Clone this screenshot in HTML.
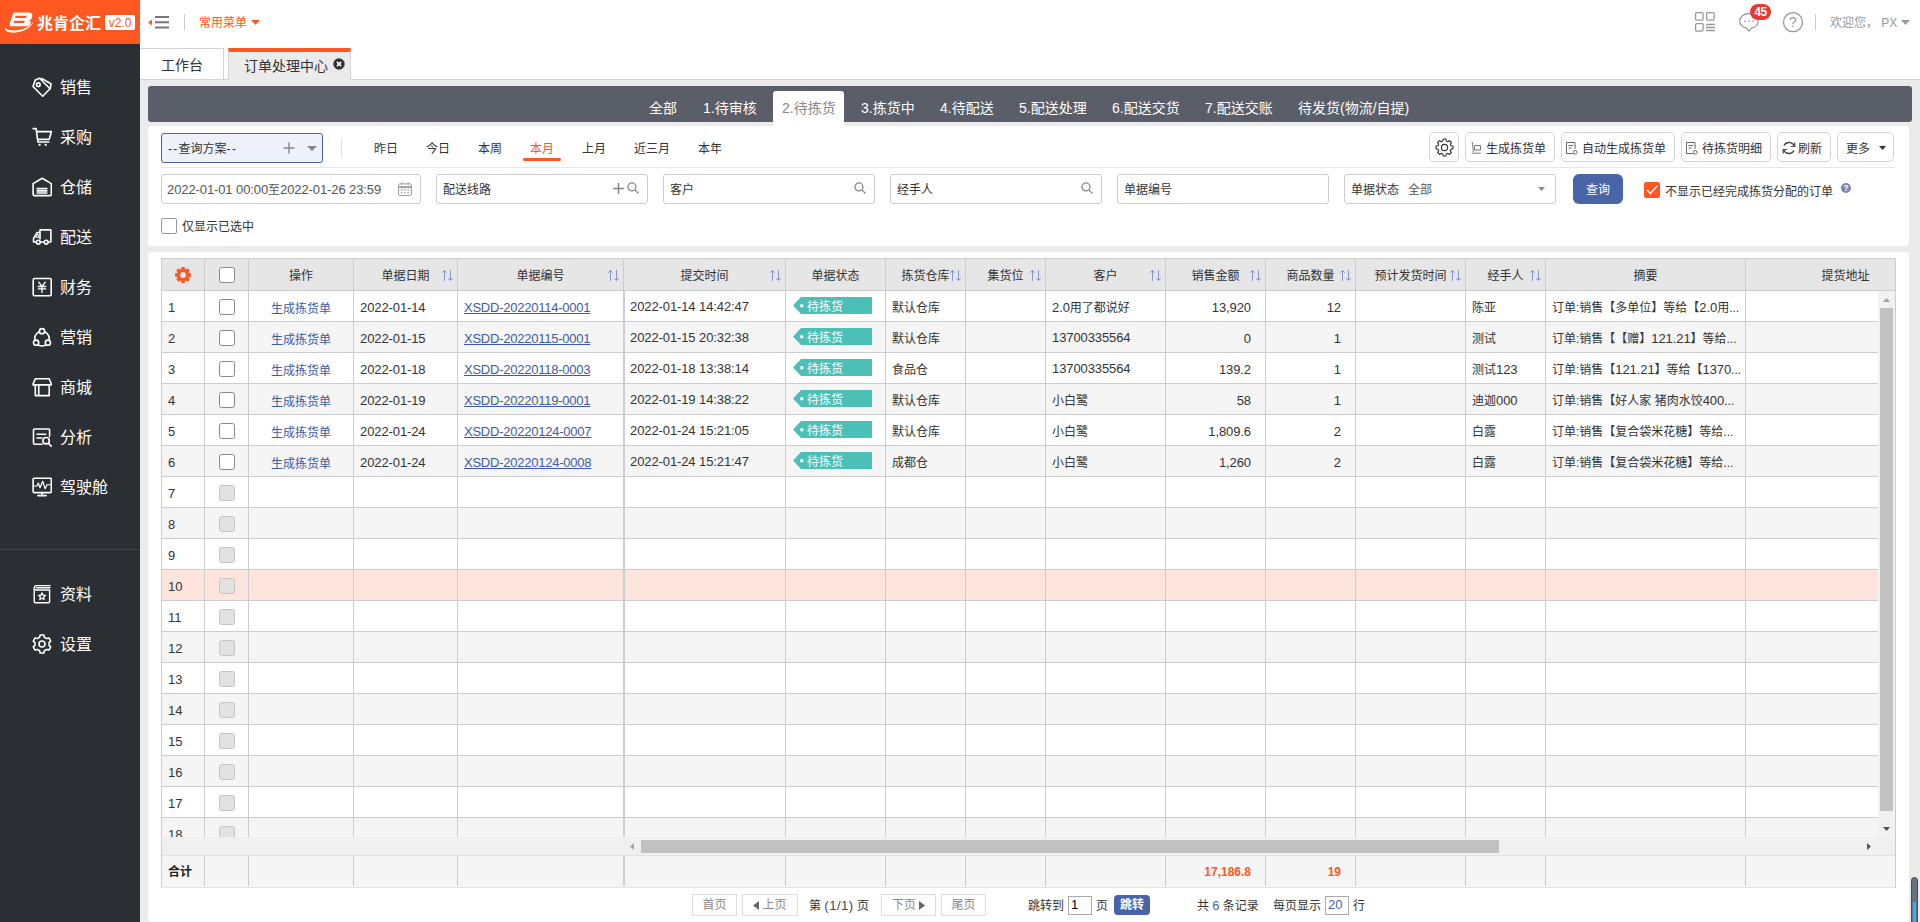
<!DOCTYPE html>
<html lang="zh-CN">
<head>
<meta charset="utf-8">
<title>订单处理中心</title>
<style>
*{box-sizing:border-box;margin:0;padding:0}
html,body{width:1920px;height:922px;overflow:hidden}
body{text-spacing-trim:space-all;font-family:"Liberation Sans","Noto Sans CJK SC",sans-serif;font-size:12px;color:#333;background:#ebebeb;position:relative}
.abs{position:absolute}
/* sidebar */
#side{position:absolute;left:0;top:0;width:140px;height:922px;background:#2b2f33}
#logo{position:absolute;left:0;top:0;width:140px;height:44px;background:#ff5722;color:#fff}
#logo .name{position:absolute;left:37px;top:11px;font-size:16px;font-weight:700;letter-spacing:0;line-height:26px;white-space:nowrap}
#logo .ver{position:absolute;left:105px;top:15px;width:30px;height:15px;background:#fff;border-radius:2px;color:#ff5722;font-size:12px;line-height:17px;text-align:center;letter-spacing:0}
.mi{position:absolute;left:0;width:140px;height:24px;color:#fff;font-size:16px;line-height:24px;white-space:nowrap}
.mi svg{position:absolute;left:32px;top:2px;width:20px;height:20px;fill:none;stroke:#fff;stroke-width:1.6;stroke-linecap:round;stroke-linejoin:round}
.mi span{position:absolute;left:60px;top:1px}
#side .sep{position:absolute;left:0;top:549px;width:140px;height:1px;background:#43474b}
/* topbar */
#top{position:absolute;left:140px;top:0;width:1780px;height:44px;background:#fff}
#top .t{position:absolute;white-space:nowrap}
.badge{position:absolute;left:1610px;top:4px;width:21px;height:16px;border-radius:8px;background:#e53935;color:#fff;font-size:12px;font-weight:700;line-height:16px;text-align:center;letter-spacing:-.300px}
#tabs{position:absolute;left:140px;top:44px;width:1780px;height:36px;background:#fff;border-bottom:1px solid #d4d4d4}
.tab{position:absolute;top:4px;height:32px;font-size:14px;line-height:30px;color:#333;white-space:nowrap}
#tab1{left:0;width:84px;border:1px solid #d4d4d4;border-left:none;border-bottom:none;padding-left:21px;top:4px;height:31px;line-height:32px}
#tab2{left:88px;width:123px;background:#ebebeb;border-top:4px solid #ff5722;border-left:1px solid #d4d4d4;border-right:1px solid #d4d4d4;padding-left:15px;line-height:28px}
/* dark bar */
#dark{position:absolute;left:148px;top:86px;width:1764px;height:36px;background:#5a5e68;border-radius:3px}
.dt{position:absolute;top:0;height:36px;line-height:45px;font-size:14px;color:#fff;white-space:nowrap}
#dtact{position:absolute;left:625px;top:5px;width:71px;height:36px;background:#fff;border-radius:3px 3px 0 0}
/* panels */
#filter{position:absolute;left:148px;top:126px;width:1761px;height:120px;background:#fff;border-radius:4px}
#grid{position:absolute;left:148px;top:250px;width:1761px;height:680px}
#gridbg{position:absolute;left:0;top:2px;width:1761px;height:670px;background:#fff;border-radius:4px}
.qsel{position:absolute;left:13px;top:7px;width:162px;height:30px;border:1px solid #4a62a8;border-radius:3px;background:#eef1fa;line-height:30px;padding-left:6px;color:#333}
.dq{position:absolute;top:11px;height:24px;line-height:24px;font-size:12px;color:#333;white-space:nowrap}
.inp{position:absolute;top:48px;height:30px;border:1px solid #ccc;border-radius:3px;background:#fff;line-height:31px;padding-left:6px;color:#333;white-space:nowrap;width:212px}
.btn{position:absolute;top:6px;height:30px;border:1px solid #d4d4d4;border-radius:5px;background:#fff;line-height:33px;color:#333;white-space:nowrap}
.btn svg{position:absolute}
/* grid */
#tbl{position:absolute;left:13px;top:8px;width:1735px;height:630px;border:1px solid #ccc;border-bottom-color:#dde3e8;overflow:hidden;background:#fff}
.hc{position:absolute;top:0;height:32px;background:#e6e6e6;border-right:1px solid #ccc;border-bottom:1px solid #ccc;text-align:center;line-height:34px;color:#333;white-space:nowrap;overflow:hidden}
.hc .so{position:absolute;right:3px;top:10px;width:13px;height:13px}
.row{position:absolute;left:0;width:1733px;height:31px;border-bottom:1px solid #ccc}
.row.ev{background:#f5f5f5}
.row.hl{background:#fde4dc}
.c{position:absolute;top:0;height:30px;line-height:35px;padding:0 6px;white-space:nowrap;overflow:hidden;color:#333}
.c.hi{line-height:33px}
.c.lo{line-height:37px}
.c.r{text-align:right;padding-right:14px}
.c.ct{text-align:center}
.n{font-size:13px;letter-spacing:-.100px;line-height:0}
.vl{z-index:2;position:absolute;top:32px;width:1px;background:#ccc;height:597px}
.cb{position:absolute;left:57px;top:8px;width:16px;height:16px;border:1px solid #8a8a8a;border-radius:2.500px;background:#fff}
.cb.dis{border-color:#c4c4c4;background:#e2e2e2}
a.lk{color:#3d5aa8;text-decoration:none}
a.lk.u{text-decoration:underline;letter-spacing:-.240px}
.tag{position:absolute;left:7px;top:6px;width:79px;height:17px}
.tag span{position:absolute;left:14px;top:0;line-height:20px;color:#fff;font-size:12px}
.pg{position:absolute;top:644px;height:22px;line-height:21px;white-space:nowrap;color:#333}
.pt{line-height:25px}
.pb{border:1px solid #ddd;background:#fff;color:#888;text-align:center}
</style>
</head>
<body>
<div id="side">
  <div id="logo">
    <svg class="abs" style="left:4px;top:10px" width="32" height="24" viewBox="0 0 32 24"><path d="M9.800 2.800h14.700c2.100 0 3.300 1.300 2.900 3.100l-.500 2.300c-.300 1.300-1 2.100-2.300 2.400 1.100.400 1.600 1.300 1.300 2.500l-.200.900c-.400 1.700-1.800 2.500-3.700 2.500H6l.900-3.300h12c.700 0 1.100-.300 1.200-.900l.100-.500c.100-.600-.200-.900-.900-.900H8.800l.700-2.700h11.300c.700 0 1.100-.300 1.200-.900l.100-.400c.100-.600-.200-.900-.900-.900H11.700L9.500 14.500H5.800z" fill="#fff" transform="translate(-.800 -.200) scale(1.060 1)"/><path d="M1.300 17.800C-.500 23.500 13 24.300 22 19.500c4-2.100 6.700-5 8-8.500-2.500 4.300-7.500 7.300-14 8.800-6.500 1.500-12.500.800-14.700-2z" fill="#fff"/></svg>
    <div class="name">兆肯企汇</div>
    <div class="ver">v2.0</div>
  </div>
  <div class="mi" style="top:75px"><svg viewBox="0 0 20 20"><path d="M1 9.500 3.300 3 7.600 1.200 18 11.700 10.700 19.200z"/><circle cx="6.300" cy="7.700" r="1.800"/><path d="M9.600 1.500l9.400 5.300-.800 4.800"/></svg><span>销售</span></div>
  <div class="mi" style="top:125px"><svg viewBox="0 0 20 20"><path d="M1.100 1.600h3l1.800 13.400h10.900M5.100 4.600h14.400l-2.400 7.800H6"/><rect x="6.600" y="16.800" width="2" height="2" fill="#fff" stroke="none"/><rect x="12.700" y="16.800" width="2" height="2" fill="#fff" stroke="none"/></svg><span>采购</span></div>
  <div class="mi" style="top:175px"><svg viewBox="0 0 20 20"><path d="M1.100 6.600 10.200 1.200l9.100 5.400v11a1 1 0 0 1-1 1H2.100a1 1 0 0 1-1-1z"/><path d="M4.600 11.600h10.800M4.600 13.800h10.800M4.600 16h10.800" stroke-width="1.700" stroke-linecap="butt"/></svg><span>仓储</span></div>
  <div class="mi" style="top:225px"><svg viewBox="0 0 20 20"><path d="M8 12V2.900h10.900V15h-2.400M11.900 15H8.500M8 5.500H5.200L1.500 11.500V15h2.500"/><path d="M5.600 7.300 3.800 10.300h2.600z" stroke-width="1"/><circle cx="6.300" cy="15.200" r="1.900"/><circle cx="14.200" cy="15.200" r="1.900"/></svg><span>配送</span></div>
  <div class="mi" style="top:275px"><svg viewBox="0 0 20 20"><rect x="1.200" y="1.500" width="18" height="17.200" rx="1.200"/><path d="M6.750 5.100 10 9.500l3.300-4.400M10 9.500v6.100M6.300 9.500h7.400M6.300 11.900h7.400" stroke-width="1.300"/></svg><span>财务</span></div>
  <div class="mi" style="top:325px"><svg viewBox="0 0 20 20"><circle cx="10" cy="11.700" r="7.300"/><circle cx="10" cy="4.200" r="2.600" fill="#2b2f33"/><circle cx="4.100" cy="15.700" r="2.600" fill="#2b2f33"/><circle cx="15.900" cy="15.700" r="2.600" fill="#2b2f33"/></svg><span>营销</span></div>
  <div class="mi" style="top:375px"><svg viewBox="0 0 20 20"><path d="M3.300 1.700h13.900l2.100 5.200v1H1.100v-1zM3.300 7.900v10.700h13.900V7.900M6.750 7.900v10.700"/></svg><span>商城</span></div>
  <div class="mi" style="top:425px"><svg viewBox="0 0 20 20"><path d="M10.200 17.200H2.500a1 1 0 0 1-1-1V3a1 1 0 0 1 1-1h14.100a1 1 0 0 1 1 1v6.500M5 7.200h8.700M5 11h4.800"/><circle cx="14.100" cy="13.700" r="3.200"/><path d="M16.600 16.400l2.600 2.800"/></svg><span>分析</span></div>
  <div class="mi" style="top:475px"><svg viewBox="0 0 20 20"><rect x="1.100" y="1.200" width="18.200" height="14.400" rx="1"/><path d="M10 15.600v3M5.900 18.600h8.200"/><path d="M2 9h3l1.300-3L8 10.800l2.700-6.500 2.500 7.400L15 7.750h3.500" stroke-width="1.200"/></svg><span>驾驶舱</span></div>
  <div class="mi" style="top:582px"><svg viewBox="0 0 20 20"><path d="M18 1.600H4.400a2.200 2.200 0 0 0-2.200 2.200v14a1 1 0 0 0 1 1h13.400a1 1 0 0 0 1-1V6H4.400a2.200 2.200 0 0 1-2.200-2.200M4.400 3.800H18" stroke-width="1.400"/><path d="M10.00 8.80L11.00 11.12L13.52 11.36L11.62 13.03L12.17 15.49L10.00 14.20L7.83 15.49L8.38 13.03L6.48 11.36L9.00 11.12z" stroke-width="1.300"/></svg><span>资料</span></div>
  <div class="mi" style="top:632px"><svg viewBox="0 0 20 20"><path d="M7.67 3.19L8.17 0.98L11.83 0.98L12.33 3.19L14.73 4.57L16.89 3.91L18.72 7.07L17.07 8.61L17.07 11.39L18.72 12.93L16.89 16.09L14.73 15.43L12.33 16.81L11.83 19.02L8.17 19.02L7.67 16.81L5.27 15.43L3.11 16.09L1.28 12.93L2.93 11.39L2.93 8.61L1.28 7.07L3.11 3.91L5.27 4.57z"/><circle cx="10" cy="10" r="3"/></svg><span>设置</span></div>
  <div class="sep"></div>
</div>
<div id="top">
  <svg class="abs" style="left:7px;top:14px" width="24" height="16" viewBox="0 0 24 16"><path d="M1 8.500 5 5.500v6z" fill="#ff5722"/><path d="M8 3h14M8 8.200h14M8 13.400h14" stroke="#777" stroke-width="2" fill="none"/></svg>
  <div class="abs" style="left:44px;top:14px;width:1px;height:16px;background:#ccc"></div>
  <div class="t" style="left:59px;top:14px;line-height:18px;color:#ff5722">常用菜单</div>
  <svg class="abs" style="left:111px;top:20px" width="9" height="5" viewBox="0 0 9 5"><path d="M0 0h9L4.500 5z" fill="#ff5722"/></svg>
  <svg class="abs" style="left:1554px;top:11px" width="22" height="22" viewBox="0 0 22 22" fill="none" stroke="#999" stroke-width="1.300"><rect x="1.600" y="1.600" width="7.500" height="7.500" rx="1"/><rect x="12.600" y="1.600" width="7.500" height="7.500" rx="1"/><rect x="1.600" y="12.600" width="7.500" height="7.500" rx="1"/><path d="M12 13.500h9M12 16.500h9M12 19.500h9"/></svg>
  <svg class="abs" style="left:1598px;top:12px" width="22" height="21" viewBox="0 0 22 21" fill="none" stroke="#999" stroke-width="1.300"><path d="M11 1.500c5.200 0 9.300 3.300 9.300 7.500 0 3.500-2.900 6.400-6.900 7.200L11 19.300 8.600 16.200C4.600 15.400 1.700 12.500 1.700 9c0-4.200 4.100-7.500 9.300-7.500z"/><path d="M6.200 9.300h1.400M10.300 9.300h1.400M14.400 9.300h1.400" stroke-width="1.500"/></svg>
  <div class="badge">45</div>
  <svg class="abs" style="left:1642px;top:12px" width="22" height="21" viewBox="0 0 22 21"><circle cx="11" cy="10.200" r="9.500" fill="none" stroke="#999" stroke-width="1.300"/><text x="11" y="15.300" font-size="14" text-anchor="middle" fill="#999" font-family="Liberation Sans, sans-serif">?</text></svg>
  <div class="abs" style="left:1675px;top:14px;width:1px;height:16px;background:#ccc"></div>
  <div class="t" style="left:1690px;top:14px;line-height:18px;color:#999">欢迎您， PX</div>
  <svg class="abs" style="left:1761px;top:20px" width="9" height="5" viewBox="0 0 9 5"><path d="M0 0h9L4.500 5z" fill="#999"/></svg>
</div>
<div id="tabs">
  <div class="tab" id="tab1">工作台</div>
  <div class="tab" id="tab2">订单处理中心<svg class="abs" style="left:104px;top:6px" width="12" height="12" viewBox="0 0 13 13"><circle cx="6.500" cy="6.500" r="6.200" fill="#333"/><path d="M4.200 4.200l4.600 4.600M8.800 4.200 4.200 8.800" stroke="#fff" stroke-width="1.600"/></svg></div>
</div>
<div id="dark"><div id="dtact"></div><div class="dt" style="left:501px">全部</div><div class="dt" style="left:555px">1.待审核</div><div class="dt" style="left:634px;color:#888">2.待拣货</div><div class="dt" style="left:713px">3.拣货中</div><div class="dt" style="left:792px">4.待配送</div><div class="dt" style="left:871px">5.配送处理</div><div class="dt" style="left:964px">6.配送交货</div><div class="dt" style="left:1057px">7.配送交账</div><div class="dt" style="left:1150px">待发货(物流/自提)</div></div>
<div id="filter">
<div class="qsel"><span style="letter-spacing:1.300px">--</span>查询方案<span style="letter-spacing:1.300px">--</span><svg class="abs" style="left:121px;top:8px" width="12" height="12" viewBox="0 0 12 12"><path d="M6 .500v11M.500 6h11" stroke="#888" stroke-width="1.400"/></svg><svg class="abs" style="left:145px;top:12px" width="10" height="5" viewBox="0 0 10 5"><path d="M0 0h10L5 5z" fill="#888"/></svg></div>
<div class="abs" style="left:193px;top:12px;width:1px;height:20px;background:#ddd"></div>
<div class="dq" style="left:226px">昨日</div><div class="dq" style="left:278px">今日</div><div class="dq" style="left:330px">本周</div><div class="dq" style="left:382px;color:#ff5722">本月</div><div class="dq" style="left:434px">上月</div><div class="dq" style="left:486px">近三月</div><div class="dq" style="left:550px">本年</div>
<div class="abs" style="left:375px;top:32px;width:38px;height:3px;border-radius:2px;background:#ff5722"></div>
<div class="abs" style="left:13px;top:41px;width:1734px;height:1px;background:#e6e6e6"></div>
<div class="btn" style="left:1281px;width:30px"><svg style="left:5px;top:5px" width="19" height="19" viewBox="0 0 20 20" fill="none" stroke="#333" stroke-width="1.200" stroke-linejoin="round"><path d="M8.17 3.14L8.57 1.11L11.43 1.11L11.83 3.14L13.56 3.86L15.27 2.70L17.30 4.73L16.14 6.44L16.86 8.17L18.89 8.57L18.89 11.43L16.86 11.83L16.14 13.56L17.30 15.27L15.27 17.30L13.56 16.14L11.83 16.86L11.43 18.89L8.57 18.89L8.17 16.86L6.44 16.14L4.73 17.30L2.70 15.27L3.86 13.56L3.14 11.83L1.11 11.43L1.11 8.57L3.14 8.17L3.86 6.44L2.70 4.73L4.73 2.70L6.44 3.86z"/><circle cx="10" cy="10" r="3.300"/></svg></div>
<div class="btn" style="left:1317px;width:90px"><svg style="left:5px;top:9px" width="11" height="12" viewBox="0 0 11 12" fill="none" stroke="#777" stroke-width="1"><path d="M.500 .500h1l.800 9.500M3.500 3.500h6v4.500h-6zM.800 11.200h9"/></svg><span style="position:absolute;left:20px">生成拣货单</span></div>
<div class="btn" style="left:1413px;width:114px"><svg style="left:4px;top:9px" width="12" height="13" viewBox="0 0 12 13" fill="none" stroke="#666" stroke-width="1"><path d="M7 11.500H.500V.500h8.500V7M2.500 3.500h4.500M2.500 6h3"/><circle cx="9.300" cy="10.300" r="1.800"/></svg><span style="position:absolute;left:20px">自动生成拣货单</span></div>
<div class="btn" style="left:1533px;width:90px"><svg style="left:4px;top:9px" width="12" height="13" viewBox="0 0 12 13" fill="none" stroke="#666" stroke-width="1"><path d="M7 11.500H.500V.500h8.500V7M2.500 3.500h4.500M2.500 6h3"/><circle cx="9.300" cy="10.300" r="1.800"/></svg><span style="position:absolute;left:20px">待拣货明细</span></div>
<div class="btn" style="left:1629px;width:54px"><svg style="left:4px;top:8px" width="14" height="14" viewBox="0 0 14 14" fill="none" stroke="#444" stroke-width="1.400"><path d="M12.300 5.500A5.600 5.600 0 0 0 2 4.500M1.700 8.500A5.600 5.600 0 0 0 12 9.500"/><path d="M12.800 1.500v4h-4M1.200 12.500v-4h4" stroke-width="1.200"/></svg><span style="position:absolute;left:20px">刷新</span></div>
<div class="btn" style="left:1689px;width:57px"><svg style="left:41px;top:13px" width="7" height="4" viewBox="0 0 7 4"><path d="M0 0h7L3.500 4z" fill="#333"/></svg><span style="position:absolute;left:8px">更多</span></div>
<div class="inp" style="left:13px;width:260px;color:#555;padding-left:5px"><span class="n">2022-01-01 00:00</span>至<span class="n">2022-01-26 23:59</span><svg class="abs" style="left:236px;top:7px" width="14" height="14" viewBox="0 0 15 15" fill="none" stroke="#999" stroke-width="1"><rect x=".500" y="2" width="14" height="12.500" rx="1.500"/><path d="M.500 5.500h14" stroke-width="2"/><path d="M4 .500v2.500M11 .500v2.500M3 8.500h2M6.500 8.500h2M10 8.500h2M3 11.500h2M6.500 11.500h2M10 11.500h2" stroke-width="1.200"/></svg></div>
<div class="inp" style="left:288px">配送线路<svg class="abs" style="left:176px;top:8px" width="11" height="11" viewBox="0 0 11 11"><path d="M5.500 0v11M0 5.500h11" stroke="#888" stroke-width="1.600"/></svg><svg class="abs" style="left:190px;top:7px" width="12" height="12" viewBox="0 0 13 13" fill="none" stroke="#888" stroke-width="1.400"><circle cx="5.300" cy="5.300" r="4.300"/><path d="M8.500 8.500l4 4"/></svg></div>
<div class="inp" style="left:515px">客户<svg class="abs" style="left:190px;top:7px" width="12" height="12" viewBox="0 0 13 13" fill="none" stroke="#888" stroke-width="1.400"><circle cx="5.300" cy="5.300" r="4.300"/><path d="M8.500 8.500l4 4"/></svg></div>
<div class="inp" style="left:742px">经手人<svg class="abs" style="left:190px;top:7px" width="12" height="12" viewBox="0 0 13 13" fill="none" stroke="#888" stroke-width="1.400"><circle cx="5.300" cy="5.300" r="4.300"/><path d="M8.500 8.500l4 4"/></svg></div>
<div class="inp" style="left:969px">单据编号</div>
<div class="inp" style="left:1196px">单据状态<span style="margin-left:9px;color:#555">全部</span><svg class="abs" style="left:193px;top:12px" width="7" height="4" viewBox="0 0 7 4"><path d="M0 0h7L3.500 4z" fill="#888"/></svg></div>
<div class="abs" style="left:1425px;top:48px;width:50px;height:30px;border-radius:6px;background:#4a64a8;color:#fff;text-align:center;line-height:32px">查询</div>
<div class="abs" style="left:1496px;top:56px;width:16px;height:16px;border-radius:2px;background:#ff5722"><svg class="abs" style="left:2px;top:3px" width="12" height="10" viewBox="0 0 12 10"><path d="M1 5l3.500 3.500L11 1" fill="none" stroke="#fff" stroke-width="1.500"/></svg></div>
<div class="abs" style="left:1517px;top:56px;line-height:20px;white-space:nowrap;color:#333">不显示已经完成拣货分配的订单</div>
<svg class="abs" style="left:1693px;top:57px" width="10" height="10" viewBox="0 0 10 10"><circle cx="5" cy="5" r="5" fill="#7a85ad"/><text x="5" y="8.400" font-size="9" font-weight="700" text-anchor="middle" fill="#fff" font-family="Liberation Sans, sans-serif">?</text></svg>
<div class="abs" style="left:13px;top:92px;width:16px;height:16px;border:1px solid #999;border-radius:2px;background:#fff"></div>
<div class="abs" style="left:34px;top:91px;line-height:21px;white-space:nowrap;color:#333">仅显示已选中</div>
</div>
<div id="grid">
<div id="gridbg"></div>
<div id="tbl">
<div class="hc" style="left:0px;width:43px"><svg class="abs" style="left:13px;top:8px" width="16" height="16" viewBox="0 0 16 16"><path d="M6.43 2.31L6.68 0.31L9.32 0.31L9.57 2.31L10.91 2.87L12.50 1.63L14.37 3.50L13.13 5.09L13.69 6.43L15.69 6.68L15.69 9.32L13.69 9.57L13.13 10.91L14.37 12.50L12.50 14.37L10.91 13.13L9.57 13.69L9.32 15.69L6.68 15.69L6.43 13.69L5.09 13.13L3.50 14.37L1.63 12.50L2.87 10.91L2.31 9.57L0.31 9.32L0.31 6.68L2.31 6.43L2.87 5.09L1.63 3.50L3.50 1.63L5.09 2.87z" fill="#ff5722" stroke="#ff5722" stroke-width=".800" stroke-linejoin="round"/><circle cx="8" cy="8" r="2.900" fill="#e6e6e6"/></svg></div><div class="hc" style="left:43px;width:44px"><div class="cb" style="left:14px;top:8px"></div></div><div class="hc" style="left:87px;width:105px">操作</div><div class="hc" style="left:192px;width:104px">单据日期<svg class="so" viewBox="0 0 13 13" fill="none" stroke="#8794c4" stroke-width="1"><path d="M3.500 12V1.500M1.200 3.800l2.300-2.300 2.300 2.300M9.500 1v10.500M7.200 9.200l2.300 2.300 2.300-2.300"/></svg></div><div class="hc" style="left:296px;width:166px">单据编号<svg class="so" viewBox="0 0 13 13" fill="none" stroke="#8794c4" stroke-width="1"><path d="M3.500 12V1.500M1.200 3.800l2.300-2.300 2.300 2.300M9.500 1v10.500M7.200 9.200l2.300 2.300 2.300-2.300"/></svg></div><div class="hc" style="left:462px;width:162px">提交时间<svg class="so" viewBox="0 0 13 13" fill="none" stroke="#8794c4" stroke-width="1"><path d="M3.500 12V1.500M1.200 3.800l2.300-2.300 2.300 2.300M9.500 1v10.500M7.200 9.200l2.300 2.300 2.300-2.300"/></svg></div><div class="hc" style="left:624px;width:100px">单据状态</div><div class="hc" style="left:724px;width:80px">拣货仓库<svg class="so" viewBox="0 0 13 13" fill="none" stroke="#8794c4" stroke-width="1"><path d="M3.500 12V1.500M1.200 3.800l2.300-2.300 2.300 2.300M9.500 1v10.500M7.200 9.200l2.300 2.300 2.300-2.300"/></svg></div><div class="hc" style="left:804px;width:80px">集货位<svg class="so" viewBox="0 0 13 13" fill="none" stroke="#8794c4" stroke-width="1"><path d="M3.500 12V1.500M1.200 3.800l2.300-2.300 2.300 2.300M9.500 1v10.500M7.200 9.200l2.300 2.300 2.300-2.300"/></svg></div><div class="hc" style="left:884px;width:120px">客户<svg class="so" viewBox="0 0 13 13" fill="none" stroke="#8794c4" stroke-width="1"><path d="M3.500 12V1.500M1.200 3.800l2.300-2.300 2.300 2.300M9.500 1v10.500M7.200 9.200l2.300 2.300 2.300-2.300"/></svg></div><div class="hc" style="left:1004px;width:100px">销售金额<svg class="so" viewBox="0 0 13 13" fill="none" stroke="#8794c4" stroke-width="1"><path d="M3.500 12V1.500M1.200 3.800l2.300-2.300 2.300 2.300M9.500 1v10.500M7.200 9.200l2.300 2.300 2.300-2.300"/></svg></div><div class="hc" style="left:1104px;width:90px">商品数量<svg class="so" viewBox="0 0 13 13" fill="none" stroke="#8794c4" stroke-width="1"><path d="M3.500 12V1.500M1.200 3.800l2.300-2.300 2.300 2.300M9.500 1v10.500M7.200 9.200l2.300 2.300 2.300-2.300"/></svg></div><div class="hc" style="left:1194px;width:110px">预计发货时间<svg class="so" viewBox="0 0 13 13" fill="none" stroke="#8794c4" stroke-width="1"><path d="M3.500 12V1.500M1.200 3.800l2.300-2.300 2.300 2.300M9.500 1v10.500M7.200 9.200l2.300 2.300 2.300-2.300"/></svg></div><div class="hc" style="left:1304px;width:80px">经手人<svg class="so" viewBox="0 0 13 13" fill="none" stroke="#8794c4" stroke-width="1"><path d="M3.500 12V1.500M1.200 3.800l2.300-2.300 2.300 2.300M9.500 1v10.500M7.200 9.200l2.300 2.300 2.300-2.300"/></svg></div><div class="hc" style="left:1384px;width:200px">摘要</div><div class="hc" style="left:1584px;width:200px">提货地址</div>
<div class="vl" style="left:42px"></div><div class="vl" style="left:86px"></div><div class="vl" style="left:191px"></div><div class="vl" style="left:295px"></div><div class="vl" style="left:461px;width:2px;background:#cdced3"></div><div class="vl" style="left:623px"></div><div class="vl" style="left:723px"></div><div class="vl" style="left:803px"></div><div class="vl" style="left:883px"></div><div class="vl" style="left:1003px"></div><div class="vl" style="left:1103px"></div><div class="vl" style="left:1193px"></div><div class="vl" style="left:1303px"></div><div class="vl" style="left:1383px"></div><div class="vl" style="left:1583px"></div>
<div class="row" style="top:32px"><div class="c " style="left:0px;width:42px"><span class="n">1</span></div><div class="cb"></div><div class="c ct lo" style="left:87px;width:104px"><a class="lk">生成拣货单</a></div><div class="c " style="left:192px;width:103px"><span class="n">2022-01-14</span></div><div class="c " style="left:296px;width:165px"><a class="lk u n">XSDD-20220114-0001</a></div><div class="c hi" style="left:462px;width:161px"><span class="n">2022-01-14 14:42:47</span></div><div class="c" style="left:624px;width:99px"><div class="tag"><svg class="abs" style="left:0;top:0" width="79" height="17" viewBox="0 0 79 17"><path d="M0 8.500 8 0h71v17H8z" fill="#4cc0b7"/><circle cx="8.800" cy="8.700" r="1.800" fill="#fff"/></svg><span>待拣货</span></div></div><div class="c " style="left:724px;width:79px">默认仓库</div><div class="c " style="left:884px;width:119px"><span class="n">2.0</span>用了都说好</div><div class="c r" style="left:1004px;width:99px"><span class="n">13,920</span></div><div class="c r" style="left:1104px;width:89px"><span class="n">12</span></div><div class="c " style="left:1304px;width:79px">陈亚</div><div class="c " style="left:1384px;width:199px">订单:销售【多单位】等给【<span class="n">2.0</span>用...</div></div>
<div class="row ev" style="top:63px"><div class="c " style="left:0px;width:42px"><span class="n">2</span></div><div class="cb"></div><div class="c ct lo" style="left:87px;width:104px"><a class="lk">生成拣货单</a></div><div class="c " style="left:192px;width:103px"><span class="n">2022-01-15</span></div><div class="c " style="left:296px;width:165px"><a class="lk u n">XSDD-20220115-0001</a></div><div class="c hi" style="left:462px;width:161px"><span class="n">2022-01-15 20:32:38</span></div><div class="c" style="left:624px;width:99px"><div class="tag"><svg class="abs" style="left:0;top:0" width="79" height="17" viewBox="0 0 79 17"><path d="M0 8.500 8 0h71v17H8z" fill="#4cc0b7"/><circle cx="8.800" cy="8.700" r="1.800" fill="#fff"/></svg><span>待拣货</span></div></div><div class="c " style="left:724px;width:79px">默认仓库</div><div class="c hi" style="left:884px;width:119px"><span class="n">13700335564</span></div><div class="c r" style="left:1004px;width:99px"><span class="n">0</span></div><div class="c r" style="left:1104px;width:89px"><span class="n">1</span></div><div class="c " style="left:1304px;width:79px">测试</div><div class="c " style="left:1384px;width:199px">订单:销售【【赠】<span class="n">121.21</span>】等给...</div></div>
<div class="row" style="top:94px"><div class="c " style="left:0px;width:42px"><span class="n">3</span></div><div class="cb"></div><div class="c ct lo" style="left:87px;width:104px"><a class="lk">生成拣货单</a></div><div class="c " style="left:192px;width:103px"><span class="n">2022-01-18</span></div><div class="c " style="left:296px;width:165px"><a class="lk u n">XSDD-20220118-0003</a></div><div class="c hi" style="left:462px;width:161px"><span class="n">2022-01-18 13:38:14</span></div><div class="c" style="left:624px;width:99px"><div class="tag"><svg class="abs" style="left:0;top:0" width="79" height="17" viewBox="0 0 79 17"><path d="M0 8.500 8 0h71v17H8z" fill="#4cc0b7"/><circle cx="8.800" cy="8.700" r="1.800" fill="#fff"/></svg><span>待拣货</span></div></div><div class="c " style="left:724px;width:79px">食品仓</div><div class="c hi" style="left:884px;width:119px"><span class="n">13700335564</span></div><div class="c r" style="left:1004px;width:99px"><span class="n">139.2</span></div><div class="c r" style="left:1104px;width:89px"><span class="n">1</span></div><div class="c " style="left:1304px;width:79px">测试<span class="n">123</span></div><div class="c " style="left:1384px;width:199px">订单:销售【<span class="n">121.21</span>】等给【<span class="n">1370</span>...</div></div>
<div class="row ev" style="top:125px"><div class="c " style="left:0px;width:42px"><span class="n">4</span></div><div class="cb"></div><div class="c ct lo" style="left:87px;width:104px"><a class="lk">生成拣货单</a></div><div class="c " style="left:192px;width:103px"><span class="n">2022-01-19</span></div><div class="c " style="left:296px;width:165px"><a class="lk u n">XSDD-20220119-0001</a></div><div class="c hi" style="left:462px;width:161px"><span class="n">2022-01-19 14:38:22</span></div><div class="c" style="left:624px;width:99px"><div class="tag"><svg class="abs" style="left:0;top:0" width="79" height="17" viewBox="0 0 79 17"><path d="M0 8.500 8 0h71v17H8z" fill="#4cc0b7"/><circle cx="8.800" cy="8.700" r="1.800" fill="#fff"/></svg><span>待拣货</span></div></div><div class="c " style="left:724px;width:79px">默认仓库</div><div class="c " style="left:884px;width:119px">小白鹭</div><div class="c r" style="left:1004px;width:99px"><span class="n">58</span></div><div class="c r" style="left:1104px;width:89px"><span class="n">1</span></div><div class="c " style="left:1304px;width:79px">迪迦<span class="n">000</span></div><div class="c " style="left:1384px;width:199px">订单:销售【好人家 猪肉水饺<span class="n">400</span>...</div></div>
<div class="row" style="top:156px"><div class="c " style="left:0px;width:42px"><span class="n">5</span></div><div class="cb"></div><div class="c ct lo" style="left:87px;width:104px"><a class="lk">生成拣货单</a></div><div class="c " style="left:192px;width:103px"><span class="n">2022-01-24</span></div><div class="c " style="left:296px;width:165px"><a class="lk u n">XSDD-20220124-0007</a></div><div class="c hi" style="left:462px;width:161px"><span class="n">2022-01-24 15:21:05</span></div><div class="c" style="left:624px;width:99px"><div class="tag"><svg class="abs" style="left:0;top:0" width="79" height="17" viewBox="0 0 79 17"><path d="M0 8.500 8 0h71v17H8z" fill="#4cc0b7"/><circle cx="8.800" cy="8.700" r="1.800" fill="#fff"/></svg><span>待拣货</span></div></div><div class="c " style="left:724px;width:79px">默认仓库</div><div class="c " style="left:884px;width:119px">小白鹭</div><div class="c r" style="left:1004px;width:99px"><span class="n">1,809.6</span></div><div class="c r" style="left:1104px;width:89px"><span class="n">2</span></div><div class="c " style="left:1304px;width:79px">白露</div><div class="c " style="left:1384px;width:199px">订单:销售【复合袋米花糖】等给...</div></div>
<div class="row ev" style="top:187px"><div class="c " style="left:0px;width:42px"><span class="n">6</span></div><div class="cb"></div><div class="c ct lo" style="left:87px;width:104px"><a class="lk">生成拣货单</a></div><div class="c " style="left:192px;width:103px"><span class="n">2022-01-24</span></div><div class="c " style="left:296px;width:165px"><a class="lk u n">XSDD-20220124-0008</a></div><div class="c hi" style="left:462px;width:161px"><span class="n">2022-01-24 15:21:47</span></div><div class="c" style="left:624px;width:99px"><div class="tag"><svg class="abs" style="left:0;top:0" width="79" height="17" viewBox="0 0 79 17"><path d="M0 8.500 8 0h71v17H8z" fill="#4cc0b7"/><circle cx="8.800" cy="8.700" r="1.800" fill="#fff"/></svg><span>待拣货</span></div></div><div class="c " style="left:724px;width:79px">成都仓</div><div class="c " style="left:884px;width:119px">小白鹭</div><div class="c r" style="left:1004px;width:99px"><span class="n">1,260</span></div><div class="c r" style="left:1104px;width:89px"><span class="n">2</span></div><div class="c " style="left:1304px;width:79px">白露</div><div class="c " style="left:1384px;width:199px">订单:销售【复合袋米花糖】等给...</div></div>
<div class="row" style="top:218px"><div class="c " style="left:0px;width:42px"><span class="n">7</span></div><div class="cb dis"></div></div>
<div class="row ev" style="top:249px"><div class="c " style="left:0px;width:42px"><span class="n">8</span></div><div class="cb dis"></div></div>
<div class="row" style="top:280px"><div class="c " style="left:0px;width:42px"><span class="n">9</span></div><div class="cb dis"></div></div>
<div class="row ev hl" style="top:311px"><div class="c " style="left:0px;width:42px"><span class="n">10</span></div><div class="cb dis"></div></div>
<div class="row" style="top:342px"><div class="c " style="left:0px;width:42px"><span class="n">11</span></div><div class="cb dis"></div></div>
<div class="row ev" style="top:373px"><div class="c " style="left:0px;width:42px"><span class="n">12</span></div><div class="cb dis"></div></div>
<div class="row" style="top:404px"><div class="c " style="left:0px;width:42px"><span class="n">13</span></div><div class="cb dis"></div></div>
<div class="row ev" style="top:435px"><div class="c " style="left:0px;width:42px"><span class="n">14</span></div><div class="cb dis"></div></div>
<div class="row" style="top:466px"><div class="c " style="left:0px;width:42px"><span class="n">15</span></div><div class="cb dis"></div></div>
<div class="row ev" style="top:497px"><div class="c " style="left:0px;width:42px"><span class="n">16</span></div><div class="cb dis"></div></div>
<div class="row" style="top:528px"><div class="c " style="left:0px;width:42px"><span class="n">17</span></div><div class="cb dis"></div></div>
<div class="row ev" style="top:559px"><div class="c " style="left:0px;width:42px"><span class="n">18</span></div><div class="cb dis"></div></div>
<div class="abs" style="z-index:3;left:1716px;top:32px;width:18px;height:548px;background:#f1f1f1"><svg class="abs" style="left:5px;top:7px" width="7" height="4" viewBox="0 0 9 5"><path d="M0 5h9L4.500 0z" fill="#a3a3a3"/></svg><div class="abs" style="left:2px;top:17px;width:13px;height:503px;background:#c1c1c1"></div><svg class="abs" style="left:5px;top:536px" width="7" height="4" viewBox="0 0 9 5"><path d="M0 0h9L4.500 5z" fill="#505050"/></svg></div>
<div class="abs" style="z-index:3;left:0;top:578px;width:1733px;height:18px;background:#f0f0f0"><svg class="abs" style="left:468px;top:6px" width="4" height="7" viewBox="0 0 5 9"><path d="M5 0v9L0 4.500z" fill="#a3a3a3"/></svg><div class="abs" style="left:479px;top:3px;width:858px;height:13px;background:#c1c1c1"></div><svg class="abs" style="left:1705px;top:6px" width="4" height="7" viewBox="0 0 5 9"><path d="M0 0v9L5 4.500z" fill="#505050"/></svg></div>
<div class="abs" style="z-index:3;left:0;top:596px;width:1733px;height:33px;background:#f5f5f5;border-top:1px solid #dde3e8"><div class="abs" style="left:42px;top:0;width:1px;height:30px;background:#ccc"></div><div class="abs" style="left:86px;top:0;width:1px;height:30px;background:#ccc"></div><div class="abs" style="left:191px;top:0;width:1px;height:30px;background:#ccc"></div><div class="abs" style="left:295px;top:0;width:1px;height:30px;background:#ccc"></div><div class="abs" style="left:461px;top:0;width:2px;height:30px;background:#cdced3"></div><div class="abs" style="left:623px;top:0;width:1px;height:30px;background:#ccc"></div><div class="abs" style="left:723px;top:0;width:1px;height:30px;background:#ccc"></div><div class="abs" style="left:803px;top:0;width:1px;height:30px;background:#ccc"></div><div class="abs" style="left:883px;top:0;width:1px;height:30px;background:#ccc"></div><div class="abs" style="left:1003px;top:0;width:1px;height:30px;background:#ccc"></div><div class="abs" style="left:1103px;top:0;width:1px;height:30px;background:#ccc"></div><div class="abs" style="left:1193px;top:0;width:1px;height:30px;background:#ccc"></div><div class="abs" style="left:1303px;top:0;width:1px;height:30px;background:#ccc"></div><div class="abs" style="left:1383px;top:0;width:1px;height:30px;background:#ccc"></div><div class="abs" style="left:1583px;top:0;width:1px;height:30px;background:#ccc"></div><div class="c" style="left:0;font-weight:700;color:#222;line-height:32px">合计</div><div class="c r" style="left:1004px;width:99px;font-weight:700;color:#ff5722;line-height:32px">17,186.8</div><div class="c r" style="left:1104px;width:89px;font-weight:700;color:#ff5722;line-height:32px">19</div></div>
</div>
<div class="pg pb" style="left:544px;width:45px">首页</div><div class="pg pb" style="left:594px;width:56px"><svg width="6" height="9" viewBox="0 0 6 9" style="vertical-align:-1px;margin-right:3px"><path d="M6 0v9L0 4.500z" fill="#666"/></svg>上页</div><div class="pg pt" style="left:661px">第 <span class="n" style="letter-spacing:.5px;color:#445">(1/1)</span> 页</div><div class="pg pb" style="left:733px;width:55px">下页<svg width="6" height="9" viewBox="0 0 6 9" style="vertical-align:-1px;margin-left:3px"><path d="M0 0v9L6 4.500z" fill="#666"/></svg></div><div class="pg pb" style="left:793px;width:45px">尾页</div><div class="pg pt" style="left:880px">跳转到</div><div class="pg" style="left:920px;top:646px;width:24px;height:19px;border:1px solid #aaa;line-height:15px;padding-left:2px;font-size:13px;color:#000">1</div><div class="pg pt" style="left:948px">页</div><div class="pg" style="left:966px;top:645px;width:36px;height:20px;border-radius:4px;background:#4a62a8;color:#fff;font-weight:700;text-align:center;line-height:20px">跳转</div><div class="pg pt" style="left:1049px">共 <span class="n" style="color:#4a62a8">6</span> 条记录</div><div class="pg pt" style="left:1125px">每页显示</div><div class="pg" style="left:1177px;top:646px;width:24px;height:19px;border:1px solid #aaa;line-height:15px;padding-left:2px;font-size:13px;color:#4a62a8">20</div><div class="pg pt" style="left:1205px">行</div>
</div>
<div class="abs" style="left:1911px;top:877px;width:7px;height:50px;border-radius:3.500px 3.500px 0 0;background:#66727f;border:1px solid #3f4c59"><div class="abs" style="left:1px;top:24px;width:3px;height:30px;background:#29b6f6"></div></div>
</body>
</html>
